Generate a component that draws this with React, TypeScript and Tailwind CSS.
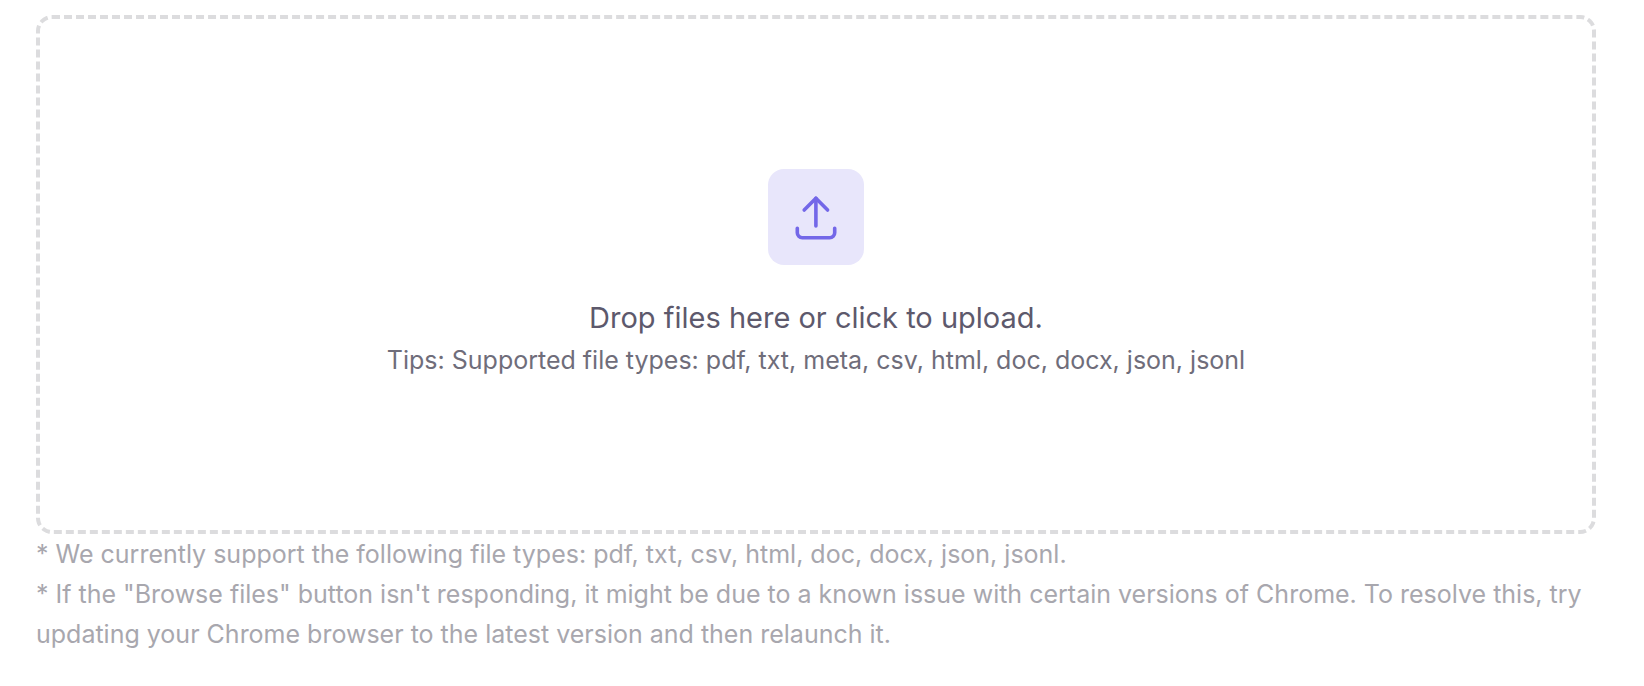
import { useState } from "react";

const notes = [
  "* We currently support the following file types: pdf, txt, csv, html, doc, docx, json, jsonl.",
  "* If the \"Browse files\" button isn't responding, it might be due to a known issue with certain versions of Chrome. To resolve this, try updating your Chrome browser to the latest version and then relaunch it.",
];

function UploadIcon() {
  return (
    <svg
      viewBox="0 0 48 48"
      className="size-12"
      fill="none"
      stroke="currentColor"
      strokeWidth="3.6"
      strokeLinecap="round"
      strokeLinejoin="round"
      aria-hidden="true"
    >
      <path d="M23.9 33V5.2" />
      <path d="M12.2 17L23.9 5.2L35.6 17" />
      <path d="M5.3 35.2V39.7A5 5 0 0 0 10.3 44.7H37.7A5 5 0 0 0 42.7 39.7V35.2" />
    </svg>
  );
}

export default function App() {
  const [, setFiles] = useState<File[]>([]);

  return (
    <main className="bg-white pt-[15px] pr-12 pl-9 font-['Inter',sans-serif] text-[25px] leading-10">
      <label
        htmlFor="upload"
        onDragOver={(e) => e.preventDefault()}
        onDrop={(e) => {
          e.preventDefault();
          setFiles(Array.from(e.dataTransfer.files));
        }}
        className="flex cursor-pointer flex-col items-center rounded-2xl border-4 border-dashed border-[#dcdcde] px-6 py-[150px] text-center"
      >
        <input
          id="upload"
          type="file"
          multiple
          accept=".pdf,.txt,.meta,.csv,.html,.doc,.docx,.json,.jsonl"
          onChange={(e) => setFiles(Array.from(e.target.files ?? []))}
          className="sr-only"
        />
        <span className="mb-[31px] flex size-24 items-center justify-center rounded-2xl bg-[#e8e6fb] text-[#7367e8]">
          <UploadIcon />
        </span>
        <span className="text-[29px] leading-11 text-[#5d596c]">Drop files here or click to upload.</span>
        <span className="text-[#6f6d7a]">
          Tips: Supported file types: pdf, txt, meta, csv, html, doc, docx, json, jsonl
        </span>
      </label>
      <div className="text-[#a8a7ae]">
        {notes.map((note) => (
          <p key={note}>{note}</p>
        ))}
      </div>
    </main>
  );
}
